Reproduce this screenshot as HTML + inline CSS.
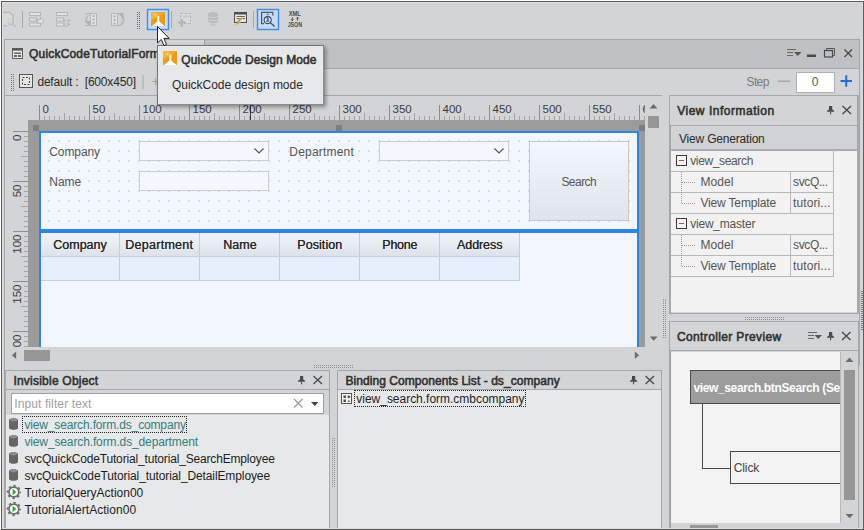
<!DOCTYPE html>
<html lang="en">
<head>
<meta charset="utf-8">
<title>QuickCode Design Mode</title>
<style>
*{box-sizing:border-box;margin:0;padding:0}
html,body{width:864px;height:530px;overflow:hidden}
body{position:relative;background:#d3d4d5;font-family:"Liberation Sans",sans-serif;font-size:12px;color:#1e1e1e}
.a{position:absolute}
.t{position:absolute;white-space:nowrap;line-height:1;z-index:5}
svg{position:absolute;overflow:visible}
.hl{position:absolute;height:1px;background:#a6a7a8}
.vl{position:absolute;width:1px;background:#a6a7a8}
</style>
</head>
<body>
<!-- window frame -->
<div class="a" style="left:1px;top:1px;width:863px;height:529px;border:1px solid #5c5c5c;z-index:9"></div>
<div class="a" style="left:2px;top:2px;width:861px;height:527px;border:1px solid #dcddde;border-right-color:#d9dadb;z-index:8"></div>
<div class="a" style="left:0;top:0;width:864px;height:1px;background:#fff;z-index:9"></div>
<div class="a" style="left:0;top:0;width:1px;height:530px;background:#fff;z-index:9"></div>
<div class="vl" style="left:4px;top:365px;height:163px"></div>

<!-- top toolbar -->
<svg style="left:0;top:0" width="864" height="39" viewBox="0 0 864 39">
  <!-- 1: doc + magnifier (disabled, partly clipped) -->
  <g fill="none" stroke="#b4b5b6" stroke-width="1.3">
    <path d="M2 12.5h8l3 3v5M2 25.500h5"/>
    <circle cx="10.500" cy="21.500" r="3" stroke="#bdbebf"/>
    <path d="M13 24l3 3" stroke="#bdbebf"/>
  </g>
  <path d="M3 13h6.500l3 3v4h-4v5H3z" fill="#dcddde" opacity=".6"/>
  <rect x="22" y="11" width="1" height="17" fill="#a9aaab"/>
  <!-- 3: form lines + plug -->
  <g fill="#e0e1e2" stroke="#b4b5b6" stroke-width="1">
    <rect x="29.500" y="12.500" width="11" height="3"/>
    <rect x="29.500" y="18" width="7" height="3"/>
    <rect x="29.500" y="23" width="11" height="3"/>
    <path d="M37.500 19.500h3v-2.500l3.500 4-3.500 4V23h-3z"/>
  </g>
  <!-- 4 -->
  <g fill="#e0e1e2" stroke="#b4b5b6" stroke-width="1">
    <rect x="56.500" y="12.500" width="11" height="3"/>
    <rect x="56.500" y="18" width="7" height="3"/>
    <rect x="56.500" y="23" width="11" height="3"/>
    <path d="M63.500 19l3 2.500 3.500-2-2 3 2 2.500-3.500-1.500-3 2 1-3z"/>
  </g>
  <!-- 5: doc + arrow down-left -->
  <g fill="none" stroke="#b6b7b8" stroke-width="1">
    <path d="M85 13.500h12M85 25.500h12"/>
    <rect x="90.500" y="13.500" width="6" height="12" fill="#e1e2e3"/>
    <path d="M88.500 15c-3 2.500-3 5.500-1 8.500" stroke-width="2.200" stroke="#bdbebf"/>
  </g>
  <path d="M84.500 21h5.500v5z" fill="#b0b1b2"/>
  <g fill="#b0b1b2"><rect x="92.500" y="15" width="2" height="2"/><rect x="92.500" y="18.500" width="2" height="2"/><rect x="92.500" y="22" width="2" height="2"/></g>
  <!-- 6: doc + arrow up-right -->
  <g fill="none" stroke="#b6b7b8" stroke-width="1">
    <path d="M111 13.500h12M111 25.500h11"/>
    <rect x="111.500" y="13.500" width="6" height="12" fill="#e1e2e3"/>
    <path d="M120.500 25c3.500-2.500 3.500-6 1.500-9" stroke-width="2.200" stroke="#bdbebf"/>
  </g>
  <path d="M118 13.500h5.500v5z" fill="#b0b1b2"/>
  <g fill="#b0b1b2"><rect x="113.500" y="15.500" width="2" height="2"/><rect x="113.500" y="19" width="2" height="2"/><rect x="113.500" y="22.500" width="2" height="2"/></g>
  <!-- grip -->
  <g fill="#676869">
    <rect x="137" y="12" width="1" height="1"/><rect x="139" y="12" width="1" height="1"/>
    <rect x="137" y="14" width="1" height="1"/><rect x="139" y="14" width="1" height="1"/>
    <rect x="137" y="16" width="1" height="1"/><rect x="139" y="16" width="1" height="1"/>
    <rect x="137" y="18" width="1" height="1"/><rect x="139" y="18" width="1" height="1"/>
    <rect x="137" y="20" width="1" height="1"/><rect x="139" y="20" width="1" height="1"/>
    <rect x="137" y="22" width="1" height="1"/><rect x="139" y="22" width="1" height="1"/>
    <rect x="137" y="24" width="1" height="1"/><rect x="139" y="24" width="1" height="1"/>
    <rect x="137" y="26" width="1" height="1"/><rect x="139" y="26" width="1" height="1"/>
    <rect x="137" y="28" width="1" height="1"/><rect x="139" y="28" width="1" height="1"/>
  </g>
  <!-- selected: QuickCode design mode -->
  <rect x="147.500" y="9.500" width="21" height="20" fill="#c4dcf9" stroke="#3a8df5" stroke-width="1.400"/>
  <g>
    <rect x="151" y="12" width="14" height="14" fill="#ef9a10"/>
    <path d="M151 12h14l-7 6.500l-7 -3z" fill="#f4ab25"/>
    <path d="M151 12h6l1 5-7 3z" fill="#f6b53a"/>
    <path d="M158.300 15.600l1 .900v5l5.200 4.500h-12.500l5.300-4.500.200-4.500z" fill="#fff"/>
    <path d="M153.500 15h4M155.500 13.300v3.400" stroke="#fde7bd" stroke-width=".9" opacity=".55"/>
  </g>
  <rect x="171" y="11" width="1" height="17" fill="#a9aaab"/>
  <!-- 10 dashed rect + plus -->
  <rect x="180.500" y="13.500" width="10" height="10" fill="#dadbdc" stroke="#b1b2b3" stroke-dasharray="2.500 1.500"/>
  <rect x="183" y="15.500" width="6" height="2" fill="#c6c7c8"/>
  <rect x="177" y="18" width="6.500" height="9.500" fill="#d3d4d5"/>
  <path d="M178 22.500h7.600M181.700 19v7.800" stroke="#b0b1b2" stroke-width="2"/>
  <!-- 11 database -->
  <g fill="#bbbcbd">
    <ellipse cx="213" cy="14" rx="5" ry="2"/>
    <rect x="208" y="14" width="10" height="7"/>
    <ellipse cx="213" cy="21" rx="5" ry="2"/>
    <rect x="212.500" y="22" width="1" height="3"/>
    <rect x="209.500" y="24.500" width="7" height="1"/>
  </g>
  <path d="M208 16.500c2 1.600 8 1.600 10 0M208 19.500c2 1.600 8 1.600 10 0" stroke="#d3d4d5" fill="none" stroke-width=".8"/>
  <!-- 12 form + lightning -->
  <rect x="234.500" y="12.500" width="12" height="10" fill="#e4e5e6" stroke="#4f4f4f"/>
  <rect x="234" y="12" width="13" height="2.500" fill="#4f4f4f"/>
  <path d="M236.500 16.500h8.500M236.500 18.500h8.500" stroke="#5a5a5a" stroke-width=".9"/>
  <path d="M243.400 17.600l-3.600.600-3.200 3.600 1.900.400-4.500 4 6.600-3.400-1.700-.600z" fill="#d8950c" stroke="#d3d4d5" stroke-width=".4"/>
  <rect x="253" y="11" width="1" height="17" fill="#a9aaab"/>
  <!-- 14 selected: inspector -->
  <rect x="257.500" y="9.500" width="21" height="20" fill="#c4dcf9" stroke="#3a8df5" stroke-width="1.400"/>
  <path d="M264 23.600h-2.400v-11.200h11.200v3.200" fill="none" stroke="#555" stroke-width="1.200"/>
  <circle cx="267.700" cy="20.100" r="3.500" fill="#dceafc" stroke="#4a4a4a" stroke-width="1.100"/>
  <path d="M270.400 22.800l4.200 3.800" stroke="#4a4a4a" stroke-width="1.300"/>
  <rect x="267" y="17.400" width="1.600" height="3.800" fill="#1a6fe0"/>
  <rect x="266.200" y="17.400" width="1.600" height="1" fill="#1a6fe0"/>
  <rect x="266" y="20.600" width="3.600" height="1.100" fill="#1a6fe0"/>
  <rect x="266.900" y="13.700" width="1.500" height="1.500" fill="#1a6fe0"/>
  <!-- 15 XML/JSON -->
  <text x="288.700" y="15.700" font-family="Liberation Sans, sans-serif" font-weight="700" font-size="6.300" fill="#4a4a4a" textLength="12.200" lengthAdjust="spacingAndGlyphs">XML</text>
  <path d="M292.300 17.200v3.400M291 19.300l1.300 1.400 1.300-1.400M297.500 20.700v-3.400M296.200 18.600l1.300-1.400 1.300 1.400" stroke="#4a4a4a" stroke-width=".9" fill="none"/>
  <text x="287.700" y="26.800" font-family="Liberation Sans, sans-serif" font-weight="700" font-size="6.300" fill="#4a4a4a" textLength="14.300" lengthAdjust="spacingAndGlyphs">JSON</text>
</svg>


<!-- document panel -->
<div class="a" style="left:4px;top:39px;width:856px;height:326px;border:1px solid #a6a7a8;border-bottom:none;background:#d3d4d5"></div>
<div class="a" style="left:5px;top:40px;width:854px;height:28px;background:#c0c1c2"></div>
<div class="a" style="left:5px;top:40px;width:199px;height:28px;background:#d3d4d5"></div>
<div class="vl" style="left:204px;top:40px;height:28px;background:#a3a4a5"></div>
<div class="hl" style="left:205px;top:68px;width:654px;background:#a4a5a6"></div>
<div class="hl" style="left:5px;top:95px;width:657px"></div>

<!-- document tab strip + form toolbar -->
<svg style="left:0;top:39px" width="864" height="58" viewBox="0 39 864 58">
  <!-- tab icon -->
  <rect x="12.500" y="48.500" width="10" height="10" fill="#e6e7e8" stroke="#626262"/>
  <rect x="12" y="48" width="11" height="2.600" fill="#5a5a5a"/>
  <rect x="14" y="52.500" width="7" height="1.500" fill="#666"/>
  <rect x="14" y="55" width="3" height="2" fill="#666"/>
  <rect x="18" y="55" width="3" height="2" fill="#666"/>
  <!-- tab strip right icons -->
  <path d="M787 49.500h9M787 52.500h6M787 55.500h6" stroke="#666" stroke-width="1"/>
  <path d="M794 52h7.500l-3.750 4z" fill="#555"/>
  <rect x="807" y="54.500" width="9" height="2.500" fill="#4a4a4a"/>
  <path d="M826.500 50.500v-2h8v7h-2" fill="none" stroke="#555" stroke-width="1"/>
  <rect x="824.500" y="50.500" width="8" height="6.500" fill="none" stroke="#4a4a4a" stroke-width="1.200"/>
  <path d="M844.500 49.500l7.500 7.500M852 49.500l-7.500 7.500" stroke="#4a4a4a" stroke-width="1.300"/>
  <!-- row2 grip -->
  <g fill="#747576">
    <rect x="11" y="74" width="1" height="1"/><rect x="13" y="74" width="1" height="1"/>
    <rect x="11" y="76" width="1" height="1"/><rect x="13" y="76" width="1" height="1"/>
    <rect x="11" y="78" width="1" height="1"/><rect x="13" y="78" width="1" height="1"/>
    <rect x="11" y="80" width="1" height="1"/><rect x="13" y="80" width="1" height="1"/>
    <rect x="11" y="82" width="1" height="1"/><rect x="13" y="82" width="1" height="1"/>
    <rect x="11" y="84" width="1" height="1"/><rect x="13" y="84" width="1" height="1"/>
    <rect x="11" y="86" width="1" height="1"/><rect x="13" y="86" width="1" height="1"/>
    <rect x="11" y="88" width="1" height="1"/><rect x="13" y="88" width="1" height="1"/>
    <rect x="11" y="90" width="1" height="1"/><rect x="13" y="90" width="1" height="1"/>
  </g>
  <!-- dashed square icon -->
  <rect x="19.500" y="74.500" width="13" height="13" fill="#e6e6e7" stroke="#555"/>
  <rect x="22.500" y="77.500" width="7" height="7" fill="none" stroke="#444" stroke-dasharray="2 1.500"/>
  <rect x="142.500" y="75" width="1" height="14" fill="#a9aaab"/>
  <path d="M152 81.500h7M155.500 78v7" stroke="#b5a493" stroke-width="1.200"/>
  <!-- step controls -->
  <rect x="778" y="80.500" width="12" height="1.500" fill="#a5a6a7"/>
  <rect x="796.500" y="72.500" width="38" height="20" fill="#fff" stroke="#b0b1b2"/>
  <path d="M840.500 81h11.500M846.250 75.200v11.600" stroke="#1f6fe0" stroke-width="2"/>
</svg>

<!-- rulers -->
<svg style="left:5px;top:96px" width="640" height="251" viewBox="5 96 640 251">
<defs><clipPath id="rc"><rect x="5" y="96" width="640" height="251"/></clipPath></defs>
<g clip-path="url(#rc)">
<path d="M39.5 105v15M89.5 105v15M139.5 105v15M189.5 105v15M239.5 105v15M289.5 105v15M339.5 105v15M389.5 105v15M439.5 105v15M489.5 105v15M539.5 105v15M589.5 105v15M639.5 105v15" stroke="#8c8d8e" stroke-width="1"/>
<path d="M64.5 113v7M114.5 113v7M164.5 113v7M214.5 113v7M264.5 113v7M314.5 113v7M364.5 113v7M414.5 113v7M464.5 113v7M514.5 113v7M564.5 113v7M614.5 113v7M44.5 116v4M49.5 116v4M54.5 116v4M59.5 116v4M69.5 116v4M74.5 116v4M79.5 116v4M84.5 116v4M94.5 116v4M99.5 116v4M104.5 116v4M109.5 116v4M119.5 116v4M124.5 116v4M129.5 116v4M134.5 116v4M144.5 116v4M149.5 116v4M154.5 116v4M159.5 116v4M169.5 116v4M174.5 116v4M179.5 116v4M184.5 116v4M194.5 116v4M199.5 116v4M204.5 116v4M209.5 116v4M219.5 116v4M224.5 116v4M229.5 116v4M234.5 116v4M244.5 116v4M249.5 116v4M254.5 116v4M259.5 116v4M269.5 116v4M274.5 116v4M279.5 116v4M284.5 116v4M294.5 116v4M299.5 116v4M304.5 116v4M309.5 116v4M319.5 116v4M324.5 116v4M329.5 116v4M334.5 116v4M344.5 116v4M349.5 116v4M354.5 116v4M359.5 116v4M369.5 116v4M374.5 116v4M379.5 116v4M384.5 116v4M394.5 116v4M399.5 116v4M404.5 116v4M409.5 116v4M419.5 116v4M424.5 116v4M429.5 116v4M434.5 116v4M444.5 116v4M449.5 116v4M454.5 116v4M459.5 116v4M469.5 116v4M474.5 116v4M479.5 116v4M484.5 116v4M494.5 116v4M499.5 116v4M504.5 116v4M509.5 116v4M519.5 116v4M524.5 116v4M529.5 116v4M534.5 116v4M544.5 116v4M549.5 116v4M554.5 116v4M559.5 116v4M569.5 116v4M574.5 116v4M579.5 116v4M584.5 116v4M594.5 116v4M599.5 116v4M604.5 116v4M609.5 116v4M619.5 116v4M624.5 116v4M629.5 116v4M634.5 116v4M644.5 116v4" stroke="#a3a4a5" stroke-width="1"/>
<path d="M13 131.5h15M13 181.5h15M13 231.5h15M13 281.5h15M13 331.5h15" stroke="#8c8d8e" stroke-width="1"/>
<path d="M21 156.5h7M21 206.5h7M21 256.5h7M21 306.5h7M24 136.5h4M24 141.5h4M24 146.5h4M24 151.5h4M24 161.5h4M24 166.5h4M24 171.5h4M24 176.5h4M24 186.5h4M24 191.5h4M24 196.5h4M24 201.5h4M24 211.5h4M24 216.5h4M24 221.5h4M24 226.5h4M24 236.5h4M24 241.5h4M24 246.5h4M24 251.5h4M24 261.5h4M24 266.5h4M24 271.5h4M24 276.5h4M24 286.5h4M24 291.5h4M24 296.5h4M24 301.5h4M24 311.5h4M24 316.5h4M24 321.5h4M24 326.5h4M24 336.5h4M24 341.5h4M24 346.5h4" stroke="#a3a4a5" stroke-width="1"/>
<g font-family="Liberation Sans, sans-serif" font-size="11.500" fill="#3c3c3c">
<text x="42.5" y="113.300">0</text>
<text x="92.5" y="113.300">50</text>
<text x="142.5" y="113.300">100</text>
<text x="192.5" y="113.300">150</text>
<text x="242.5" y="113.300">200</text>
<text x="292.5" y="113.300">250</text>
<text x="342.5" y="113.300">300</text>
<text x="392.5" y="113.300">350</text>
<text x="442.5" y="113.300">400</text>
<text x="492.5" y="113.300">450</text>
<text x="542.5" y="113.300">500</text>
<text x="592.5" y="113.300">550</text>
<text x="642.5" y="113.300">600</text>
<text transform="translate(20.700 134.5) rotate(-90)" text-anchor="end">0</text>
<text transform="translate(20.700 184.5) rotate(-90)" text-anchor="end">50</text>
<text transform="translate(20.700 234.5) rotate(-90)" text-anchor="end">100</text>
<text transform="translate(20.700 284.5) rotate(-90)" text-anchor="end">150</text>
<text transform="translate(20.700 334.5) rotate(-90)" text-anchor="end">200</text>
</g>
<rect x="250" y="100" width="1" height="21" fill="#333"/>
</g></svg>

<!-- design surface -->
<div class="a" style="left:28px;top:120px;width:617px;height:227px;background:#9b9b9b;overflow:hidden">
  <div class="a" style="left:5px;top:5px;width:6px;height:6px;background:#7f7f7f"></div>
  <div class="a" style="left:308px;top:5px;width:6px;height:6px;background:#7f7f7f"></div>
  <div class="a" style="left:611px;top:5px;width:6px;height:6px;background:#7f7f7f"></div>
  <!-- form : page x=39 → local 11 -->
  <div class="a" style="left:11px;top:11px;width:600px;height:230px;background:#f2f7fe;border:2px solid #2785f6;border-bottom:none">
    <!-- search area dotted grid; local origin = page (41,133) -->
    <svg style="left:0;top:0" width="596" height="96"><defs><pattern id="dots" x="7" y="7" width="10" height="10" patternUnits="userSpaceOnUse"><rect x="0" y="0" width="2" height="2" fill="#d9dde3"/></pattern></defs><rect x="0" y="0" width="596" height="96" fill="url(#dots)"/></svg>
    <div class="a" style="left:-2px;top:96px;width:600px;height:4px;background:#2785f6"></div>
    <!-- controls -->
    <div class="a" style="left:98px;top:8px;width:130px;height:20px;border:1px solid #c9ccd1;background:#f4f8fe"></div>
    <div class="a" style="left:98px;top:38px;width:130px;height:20px;border:1px solid #c9ccd1;background:#f4f8fe"></div>
    <div class="a" style="left:338px;top:8px;width:130px;height:20px;border:1px solid #c9ccd1;background:#f4f8fe"></div>
    <svg style="left:0;top:0" width="596" height="96"><path d="M213.500 15.500l4.500 4.500 4.500-4.500M453.500 15.500l4.500 4.500 4.500-4.500" fill="none" stroke="#555" stroke-width="1.200"/></svg>
    <div class="a" style="left:488px;top:8px;width:100px;height:80px;border:1px solid #c3c6cb;background:linear-gradient(#f3f7fe,#dfe3ea)"></div>
    <!-- grid -->
    <div class="a" style="left:0;top:100px;width:479px;height:23px;background:linear-gradient(#f1f4fa,#dde2ea)"></div>
    <div class="a" style="left:0;top:123px;width:479px;height:24px;background:#e4effd"></div>
    <div class="hl" style="left:0;top:123px;width:479px;background:#cacdd4"></div>
    <div class="hl" style="left:0;top:147px;width:479px;background:#cacdd4"></div>
    <div class="vl" style="left:78px;top:100px;height:48px;background:#cacdd4"></div>
    <div class="vl" style="left:158px;top:100px;height:48px;background:#cacdd4"></div>
    <div class="vl" style="left:238px;top:100px;height:48px;background:#cacdd4"></div>
    <div class="vl" style="left:318px;top:100px;height:48px;background:#cacdd4"></div>
    <div class="vl" style="left:398px;top:100px;height:48px;background:#cacdd4"></div>
    <div class="vl" style="left:478px;top:100px;height:48px;background:#cacdd4"></div>
  </div>
</div>
<!-- design scrollbars -->
<svg style="left:5px;top:96px" width="660" height="270" viewBox="5 96 660 270">
  <path d="M649.500 108.500l4-4.500 4 4.500z" fill="#6b6b6b"/>
  <rect x="648" y="116" width="11" height="12" fill="#969696"/>
  <path d="M649.800 336.500h7.800l-3.900 4.300z" fill="#6b6b6b"/>
  <path d="M16.200 351.500v7.500l-4.300-3.750z" fill="#6b6b6b"/>
  <rect x="24" y="350" width="26" height="11" fill="#969696"/>
  <path d="M634.800 351.500v7.500l4.300-3.750z" fill="#6b6b6b"/>
</svg>

<!-- right: View Information -->
<div class="a" style="left:669px;top:95px;width:190px;height:219px;border:1px solid #a6a7a8;background:#d3d4d5"></div>
<div class="a" style="left:670px;top:125px;width:188px;height:1px;background:#a6a7a8"></div>
<div class="a" style="left:671px;top:126px;width:187px;height:23px;background:#d1d2d3"></div>
<div class="a" style="left:671px;top:149px;width:187px;height:2px;background:#acadae"></div>
<div class="a" style="left:670px;top:126px;width:1px;height:187px;background:#a6a7a8"></div>
<div class="a" style="left:671px;top:151px;width:187px;height:161px;background:#f2f2f2"></div>
<svg style="left:670px;top:96px" width="190" height="220" viewBox="670 96 190 220">
  <!-- header icons -->
  <path d="M829 106h3.200v3.200l2 1.700v.900h-7.200v-.900l2-1.700z" fill="#4a4a4a"/><rect x="830.05" y="111.6" width="1.100" height="2.700" fill="#4a4a4a"/><path d="M842.5 106l8.5 8M851 106l-8.5 8" stroke="#4a4a4a" stroke-width="1.300"/>
  <!-- tree grid lines -->
  <g stroke="#b7b8b9" stroke-width="1">
    <path d="M671 171.500h163M671 192.500h163M671 213.500h163M671 234.500h163M671 255.500h163M671 276.500h163"/>
    <path d="M833.500 150v127M790.500 171.500v42M790.500 234.500v42"/>
  </g>
  <!-- expanders -->
  <rect x="676.500" y="155.500" width="10" height="10" fill="#f6f6f6" stroke="#3c3c3c"/>
  <rect x="679" y="160" width="5" height="1" fill="#e8452f"/>
  <rect x="676.500" y="218.500" width="10" height="10" fill="#f6f6f6" stroke="#3c3c3c"/>
  <rect x="679" y="223" width="5" height="1" fill="#e8452f"/>
  <!-- dotted connectors -->
  <g stroke="#9a9a9a" stroke-width="1" stroke-dasharray="1 1" fill="none">
    <path d="M681.500 172v31M682 182.500h14M682 203.500h14"/>
    <path d="M681.500 235v31M682 245.500h14M682 266.500h14"/>
  </g>
</svg>
<!-- grip on far right edge -->
<svg style="left:858px;top:288px;z-index:10" width="6" height="46" viewBox="858 288 6 46"><path d="M862 291v39" stroke="#555" stroke-width="1.400" stroke-dasharray="1 1"/></svg>
<div class="a" style="left:857px;top:96px;width:1px;height:217px;background:#a6a7a8"></div>
<!-- splitter grips -->
<svg style="left:660px;top:290px" width="204" height="60" viewBox="660 290 204 60">
  <path d="M663.500 299v39M665.500 299v39" stroke="#8f9091" stroke-width="1" stroke-dasharray="1 1"/>
  <path d="M745 317.500h40M745 319.500h40" stroke="#8f9091" stroke-width="1" stroke-dasharray="1 1"/>
</svg>
<!-- right: Controller Preview -->
<div class="a" style="left:669px;top:321px;width:190px;height:210px;border:1px solid #a6a7a8;background:#d3d4d5"></div>
<div class="a" style="left:670px;top:350px;width:188px;height:1px;background:#a6a7a8"></div>
<div class="a" style="left:670px;top:351px;width:188px;height:177px;background:#d3d4d5;border-left:1px solid #a0a1a2"></div>
<div class="a" style="left:671px;top:352px;width:170px;height:171px;background:#f3f3f3;overflow:hidden;border-right:1px solid #b9babb">
  <div class="a" style="left:19px;top:18px;width:200px;height:34px;background:#9c9c9c;border:1px solid #4a4a4a"></div>
  <div class="a" style="left:31px;top:52px;width:1px;height:65px;background:#4a4a4a"></div>
  <div class="a" style="left:31px;top:116px;width:29px;height:1px;background:#4a4a4a"></div>
  <div class="a" style="left:59px;top:99px;width:200px;height:33px;background:#f3f3f3;border:1px solid #4a4a4a"></div>
  <span class="t" style="left:22.400px;top:30px;font-size:12px;font-weight:700;color:#fff;letter-spacing:-0.355px">view_search.btnSearch (Se</span>
</div>
<svg style="left:670px;top:322px" width="190" height="208" viewBox="670 322 190 208">
  <path d="M808 332.500h9M808 335.500h6M808 338.500h6" stroke="#666" stroke-width="1"/>
  <path d="M814.500 335h7.500l-3.750 4z" fill="#555"/>
  <path d="M829 332h3.200v3.200l2 1.700v.900h-7.200v-.900l2-1.700z" fill="#4a4a4a"/><rect x="830.05" y="337.6" width="1.100" height="2.700" fill="#4a4a4a"/><path d="M842 332l8.5 8M850.5 332l-8.5 8" stroke="#4a4a4a" stroke-width="1.300"/>
  <path d="M845.500 362l4-4.500 4 4.500z" fill="#6b6b6b"/>
  <rect x="844" y="370" width="11" height="130" fill="#969696"/>
  <path d="M845.700 514h7.800l-3.900 4.300z" fill="#6b6b6b"/>
  <rect x="690" y="525" width="28" height="3" fill="#969696"/>
</svg>

<!-- bottom splitter grip -->
<svg style="left:300px;top:362px" width="70" height="8" viewBox="300 362 70 8">
  <path d="M314 365.500h40M314 367.500h40" stroke="#8f9091" stroke-width="1" stroke-dasharray="1 1"/>
</svg>
<!-- Invisible Object -->
<div class="a" style="left:5px;top:370px;width:325px;height:160px;border:1px solid #a6a7a8;background:#d3d4d5"></div>
<div class="a" style="left:6px;top:389px;width:323px;height:1px;background:#a6a7a8"></div>
<div class="a" style="left:6px;top:415px;width:323px;height:113px;background:#e7e8e9"></div>
<div class="a" style="left:11px;top:393px;width:313px;height:21px;background:#fff;border:1px solid #a0a1a2"></div>
<svg style="left:6px;top:371px" width="324" height="157" viewBox="6 371 324 157">
  <path d="M300 376h3.200v3.200l2 1.700v.900h-7.200v-.900l2-1.700z" fill="#4a4a4a"/><rect x="301.05" y="381.6" width="1.100" height="2.700" fill="#4a4a4a"/><path d="M313.5 376l8.5 8M322 376l-8.5 8" stroke="#4a4a4a" stroke-width="1.300"/>
  <path d="M294 399l8.500 8.500M302.500 399l-8.500 8.500" stroke="#9a9a9a" stroke-width="1.200"/>
  <path d="M311 402h7.500l-3.750 4z" fill="#444"/>
  <!-- focus rect -->
  <!-- db icons -->
  <path d="M9 420c0-2.400 9-2.400 9 0v8c0 2.400-9 2.400-9 0z" fill="#666"/><ellipse cx="13.500" cy="419.9" rx="3.700" ry="1.300" fill="#8d8d8d"/>
  <path d="M9 437c0-2.400 9-2.400 9 0v8c0 2.400-9 2.400-9 0z" fill="#666"/><ellipse cx="13.500" cy="436.9" rx="3.700" ry="1.300" fill="#8d8d8d"/>
  <path d="M9 454c0-2.400 9-2.400 9 0v8c0 2.400-9 2.400-9 0z" fill="#666"/><ellipse cx="13.500" cy="453.9" rx="3.700" ry="1.300" fill="#8d8d8d"/>
  <path d="M9 471c0-2.400 9-2.400 9 0v8c0 2.400-9 2.400-9 0z" fill="#666"/><ellipse cx="13.500" cy="470.9" rx="3.700" ry="1.300" fill="#8d8d8d"/>
  <!-- gear/play icons -->
  <circle cx="13.900" cy="492" r="6.300" fill="none" stroke="#696969" stroke-width="1.700" stroke-dasharray="2.300 2.648" stroke-dashoffset="1.150"/>
  <circle cx="13.900" cy="492" r="4.900" fill="#fff" stroke="#696969" stroke-width="1.700"/>
  <path d="M12.600 488.75l3.700 3.250-3.700 3.250z" fill="#1faa1f"/>
  <circle cx="13.900" cy="509" r="6.300" fill="none" stroke="#696969" stroke-width="1.700" stroke-dasharray="2.300 2.648" stroke-dashoffset="1.150"/>
  <circle cx="13.900" cy="509" r="4.900" fill="#fff" stroke="#696969" stroke-width="1.700"/>
  <path d="M12.600 505.75l3.700 3.250-3.700 3.250z" fill="#1faa1f"/>
</svg>
<!-- vertical splitter grip between bottom panels -->
<svg style="left:330px;top:430px" width="8" height="64" viewBox="330 430 8 64">
  <path d="M332.500 438v49M334.500 438v49" stroke="#8f9091" stroke-width="1" stroke-dasharray="1 1"/>
</svg>
<!-- Binding Components List -->
<div class="a" style="left:337px;top:370px;width:325px;height:160px;border:1px solid #a6a7a8;background:#d3d4d5"></div>
<div class="a" style="left:338px;top:389px;width:323px;height:1px;background:#a6a7a8"></div>
<div class="a" style="left:338px;top:390px;width:323px;height:138px;background:#e7e8e9"></div>
<svg style="left:338px;top:371px" width="324" height="157" viewBox="338 371 324 157">
  <path d="M632 376h3.200v3.200l2 1.700v.900h-7.200v-.900l2-1.700z" fill="#4a4a4a"/><rect x="633.05" y="381.6" width="1.100" height="2.700" fill="#4a4a4a"/><path d="M645.5 376l8.5 8M654 376l-8.5 8" stroke="#4a4a4a" stroke-width="1.300"/>
  <rect x="341.500" y="393.500" width="10" height="10" fill="#f4f4f4" stroke="#555"/>
  <rect x="343.500" y="395.500" width="2.500" height="2.500" fill="#555"/>
  <circle cx="348.800" cy="396.800" r="1.400" fill="#555"/>
  <rect x="343.500" y="399.500" width="2.500" height="2.500" fill="#555"/>
  <path d="M347.500 402l1.300-2.500 1.300 2.500z" fill="#777"/>
</svg>
<div class="a" style="left:22px;top:416px;width:165px;height:17px;border:1px dotted #222"></div>
<div class="a" style="left:354px;top:390px;width:172px;height:17px;border:1px dotted #222"></div>

<!-- tooltip -->
<div class="a" style="left:157px;top:45px;width:167px;height:60px;background:#e7e8e9;border:1px solid #777;border-right-color:#8a8a8a;border-bottom-color:#8a8a8a;box-shadow:2px 2px 4px rgba(0,0,0,.38);z-index:4"></div>
<svg style="left:150px;top:20px;z-index:6" width="60" height="60" viewBox="150 20 60 60">
  <g>
    <rect x="163" y="51" width="14" height="14" fill="#ef9a10"/>
    <path d="M163 51h14l-7 6.500l-7 -3z" fill="#f4ab25"/>
    <path d="M163 51h6l1 5-7 3z" fill="#f6b53a"/>
    <path d="M170.300 54.600l1 .900v5l5.200 4.500h-12.500l5.300-4.500.200-4.500z" fill="#fff"/>
    <path d="M165.500 54h4M167.500 52.300v3.400" stroke="#fde7bd" stroke-width=".9" opacity=".55"/>
  </g>
  <!-- mouse cursor -->
  <path d="M157.500 26.500v16.500l3.800-3.600 2.700 6.200 2.600-1.100-2.700-6.100h5.300z" fill="#fff" stroke="#222" stroke-width="1" stroke-linejoin="miter"/>
</svg>

<span class="t" style="left:29.0px;top:48.0px;font-size:12px;font-weight:400;color:#303030;letter-spacing:0.193px;-webkit-text-stroke:0.55px #303030;max-width:128px;overflow:hidden;padding-bottom:3px;">QuickCodeTutorialForm</span>
<span class="t" style="left:37.4px;top:76.0px;font-size:12px;font-weight:400;color:#2b2b2b;letter-spacing:-0.184px;white-space:pre;">default :  [600x450]</span>
<span class="t" style="left:746.5px;top:76.0px;font-size:12px;font-weight:400;color:#7a7a7a;letter-spacing:-0.622px;">Step</span>
<span class="t" style="left:811.7px;top:76.0px;font-size:12px;font-weight:400;color:#555;">0</span>
<span class="t" style="left:181.3px;top:54.0px;font-size:12px;font-weight:400;color:#303030;letter-spacing:0.090px;-webkit-text-stroke:0.55px #303030;">QuickCode Design Mode</span>
<span class="t" style="left:172.0px;top:79.0px;font-size:12px;font-weight:400;color:#2b2b2b;letter-spacing:-0.030px;">QuickCode design mode</span>
<span class="t" style="left:49.3px;top:146.0px;font-size:12px;font-weight:400;color:#555;letter-spacing:-0.094px;">Company</span>
<span class="t" style="left:49.3px;top:176.0px;font-size:12px;font-weight:400;color:#555;letter-spacing:-0.079px;">Name</span>
<span class="t" style="left:289.3px;top:146.0px;font-size:12px;font-weight:400;color:#555;letter-spacing:0.200px;">Department</span>
<span class="t" style="left:561.4px;top:176.0px;font-size:12px;font-weight:400;color:#555;letter-spacing:-0.539px;">Search</span>
<span class="t" style="left:53.3px;top:239.0px;font-size:12.5px;font-weight:400;color:#2a2a2a;letter-spacing:-0.014px;text-shadow:0 0 0.3px #333;">Company</span>
<span class="t" style="left:125.3px;top:239.0px;font-size:12.5px;font-weight:400;color:#2a2a2a;letter-spacing:0.269px;text-shadow:0 0 0.3px #333;">Department</span>
<span class="t" style="left:223.3px;top:239.0px;font-size:12.5px;font-weight:400;color:#2a2a2a;letter-spacing:0.014px;text-shadow:0 0 0.3px #333;">Name</span>
<span class="t" style="left:297.3px;top:239.0px;font-size:12.5px;font-weight:400;color:#2a2a2a;letter-spacing:0.064px;text-shadow:0 0 0.3px #333;">Position</span>
<span class="t" style="left:382.3px;top:239.0px;font-size:12.5px;font-weight:400;color:#2a2a2a;letter-spacing:-0.231px;text-shadow:0 0 0.3px #333;">Phone</span>
<span class="t" style="left:457.0px;top:239.0px;font-size:12.5px;font-weight:400;color:#2a2a2a;letter-spacing:-0.080px;text-shadow:0 0 0.3px #333;">Address</span>
<span class="t" style="left:677.2px;top:105.0px;font-size:12px;font-weight:400;color:#303030;letter-spacing:0.515px;-webkit-text-stroke:0.55px #303030;">View Information</span>
<span class="t" style="left:679.0px;top:133.0px;font-size:12px;font-weight:400;color:#2b2b2b;letter-spacing:-0.193px;">View Generation</span>
<span class="t" style="left:690.2px;top:155.0px;font-size:12px;font-weight:400;color:#555;letter-spacing:-0.355px;">view_search</span>
<span class="t" style="left:700.4px;top:176.0px;font-size:12px;font-weight:400;color:#555;letter-spacing:0.083px;">Model</span>
<span class="t" style="left:793.0px;top:176.0px;font-size:12px;font-weight:400;color:#555;letter-spacing:-0.363px;">svcQ...</span>
<span class="t" style="left:700.4px;top:197.0px;font-size:12px;font-weight:400;color:#555;letter-spacing:-0.155px;">View Template</span>
<span class="t" style="left:793.0px;top:197.0px;font-size:12px;font-weight:400;color:#555;letter-spacing:0.101px;">tutori...</span>
<span class="t" style="left:690.2px;top:218.0px;font-size:12px;font-weight:400;color:#555;letter-spacing:-0.214px;">view_master</span>
<span class="t" style="left:700.4px;top:239.0px;font-size:12px;font-weight:400;color:#555;letter-spacing:0.083px;">Model</span>
<span class="t" style="left:793.0px;top:239.0px;font-size:12px;font-weight:400;color:#555;letter-spacing:-0.363px;">svcQ...</span>
<span class="t" style="left:700.4px;top:260.0px;font-size:12px;font-weight:400;color:#555;letter-spacing:-0.155px;">View Template</span>
<span class="t" style="left:793.0px;top:260.0px;font-size:12px;font-weight:400;color:#555;letter-spacing:0.101px;">tutori...</span>
<span class="t" style="left:677.0px;top:331.0px;font-size:12px;font-weight:400;color:#303030;letter-spacing:0.364px;-webkit-text-stroke:0.55px #303030;">Controller Preview</span>
<span class="t" style="left:733.7px;top:462.0px;font-size:12px;font-weight:400;color:#444;letter-spacing:-0.100px;">Click</span>
<span class="t" style="left:13.4px;top:375.0px;font-size:12px;font-weight:400;color:#303030;letter-spacing:0.227px;-webkit-text-stroke:0.55px #303030;">Invisible Object</span>
<span class="t" style="left:14.2px;top:398.0px;font-size:12px;font-weight:400;color:#a0a0a0;letter-spacing:0.113px;">Input filter text</span>
<span class="t" style="left:24.4px;top:419.0px;font-size:12px;font-weight:400;color:#2f8080;letter-spacing:-0.148px;">view_search.form.ds_company</span>
<span class="t" style="left:24.4px;top:436.0px;font-size:12px;font-weight:400;color:#2f8080;letter-spacing:-0.127px;">view_search.form.ds_department</span>
<span class="t" style="left:24.4px;top:453.0px;font-size:12px;font-weight:400;color:#1e1e1e;letter-spacing:-0.168px;">svcQuickCodeTutorial_tutorial_SearchEmployee</span>
<span class="t" style="left:24.4px;top:470.0px;font-size:12px;font-weight:400;color:#1e1e1e;letter-spacing:-0.108px;">svcQuickCodeTutorial_tutorial_DetailEmployee</span>
<span class="t" style="left:24.4px;top:487.0px;font-size:12px;font-weight:400;color:#1e1e1e;letter-spacing:-0.003px;">TutorialQueryAction00</span>
<span class="t" style="left:24.4px;top:504.0px;font-size:12px;font-weight:400;color:#1e1e1e;letter-spacing:0.040px;">TutorialAlertAction00</span>
<span class="t" style="left:345.5px;top:375.0px;font-size:12px;font-weight:400;color:#303030;letter-spacing:0.060px;-webkit-text-stroke:0.55px #303030;">Binding Components List - ds_company</span>
<span class="t" style="left:356.3px;top:393.0px;font-size:12px;font-weight:400;color:#1e1e1e;letter-spacing:-0.020px;">view_search.form.cmbcompany</span>
</body>
</html>
